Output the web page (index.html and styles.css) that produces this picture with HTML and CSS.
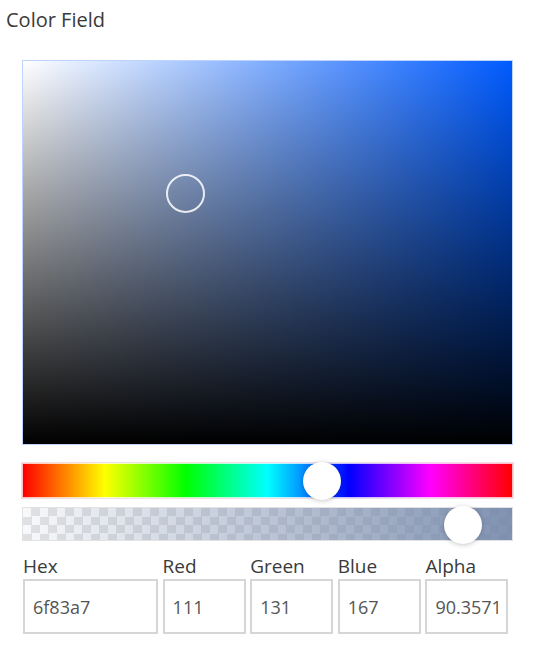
FILE: index.html
```html
<!DOCTYPE html>
<html>
<head>
<meta charset="utf-8">
<link rel="stylesheet" href="styles.css">
</head>
<body>
<div class="title">Color Field</div>
<div class="picker">
  <div class="field">
    <div class="field-handle"></div>
  </div>
  <div class="slider hue">
    <div class="thumb hue-thumb"></div>
  </div>
  <div class="slider alpha">
    <div class="alpha-fill"></div>
    <div class="thumb alpha-thumb"></div>
  </div>
</div>
<div class="inputs">
  <label class="cell"><span class="lbl">Hex</span><input class="box" value="6f83a7"></label>
  <label class="cell"><span class="lbl">Red</span><input class="box" value="111"></label>
  <label class="cell"><span class="lbl">Green</span><input class="box" value="131"></label>
  <label class="cell"><span class="lbl">Blue</span><input class="box" value="167"></label>
  <label class="cell"><span class="lbl">Alpha</span><input class="box" value="90.35714285714286"></label>
</div>
</body>
</html>
```
FILE: styles.css
```css
* { box-sizing: border-box; }
body {
  margin: 0;
  background: #fff;
  font-family: "Open Sans", "Noto Sans", sans-serif;
  color: #333;
}
.title {
  font-size: 20px;
  line-height: 26px;
  padding: 7px 0 0 6px;
  color: #3a3a3a;
}
.picker {
  margin: 27px 0 0 22px;
  width: 491px;
}
.field {
  position: relative;
  height: 385px;
  border: 1px solid rgba(0, 80, 255, 0.25);
  background:
    linear-gradient(to top, #000, rgba(0,0,0,0)),
    linear-gradient(to right, #fff, #005bff);
  background-clip: padding-box;
}
.field-handle {
  position: absolute;
  left: 143px;
  top: 113px;
  width: 39px;
  height: 39px;
  border-radius: 50%;
  border: 2px solid rgba(255,255,255,0.85);
}
.slider {
  position: relative;
  height: 35px;
}
.hue {
  margin-top: 18px;
  border: 1px solid rgba(255,255,255,0.75);
  background: linear-gradient(to right, #f00 0%, #ff0 16.67%, #0f0 33.33%, #0ff 50%, #00f 66.67%, #f0f 83.33%, #f00 100%);
  background-clip: border-box;
  box-shadow: 0 0 0 1px rgba(230,200,210,0.6);
}
.alpha {
  margin-top: 9px;
  height: 34px;
  border: 1px solid #e2e2e2;
  background-color: #fff;
  background-image: conic-gradient(#e6e6e6 0 25%, #fff 0 50%, #e6e6e6 0 75%, #fff 0);
  background-size: 17px 17px;
}
.alpha-fill {
  position: absolute;
  inset: 0;
  background: linear-gradient(to right, rgba(111,131,167,0.05), rgba(111,131,167,0.88));
}
.thumb {
  position: absolute;
  width: 38px;
  height: 38px;
  border-radius: 50%;
  background: #fff;
  box-shadow: 0 1px 5px rgba(0,0,0,0.22);
}
.hue-thumb { left: 280px; top: -2px; }
.alpha-thumb { left: 421px; top: -2px; }
.inputs {
  display: grid;
  grid-template-columns: 135px 83px 83px 83px 83px;
  column-gap: 4.6px;
  margin: 13px 0 0 23px;
}
.cell {
  display: flex;
  flex-direction: column;
}
.lbl {
  font-size: 19px;
  line-height: 25px;
  color: #3a3a3a;
}
.box {
  width: 100%;
  height: 55px;
  border: 2px solid #d6d6d6;
  padding: 0 8px;
  font-family: "Open Sans", "Noto Sans", sans-serif;
  font-size: 18px;
  color: #555;
  background: #fff;
  outline: none;
}
```
